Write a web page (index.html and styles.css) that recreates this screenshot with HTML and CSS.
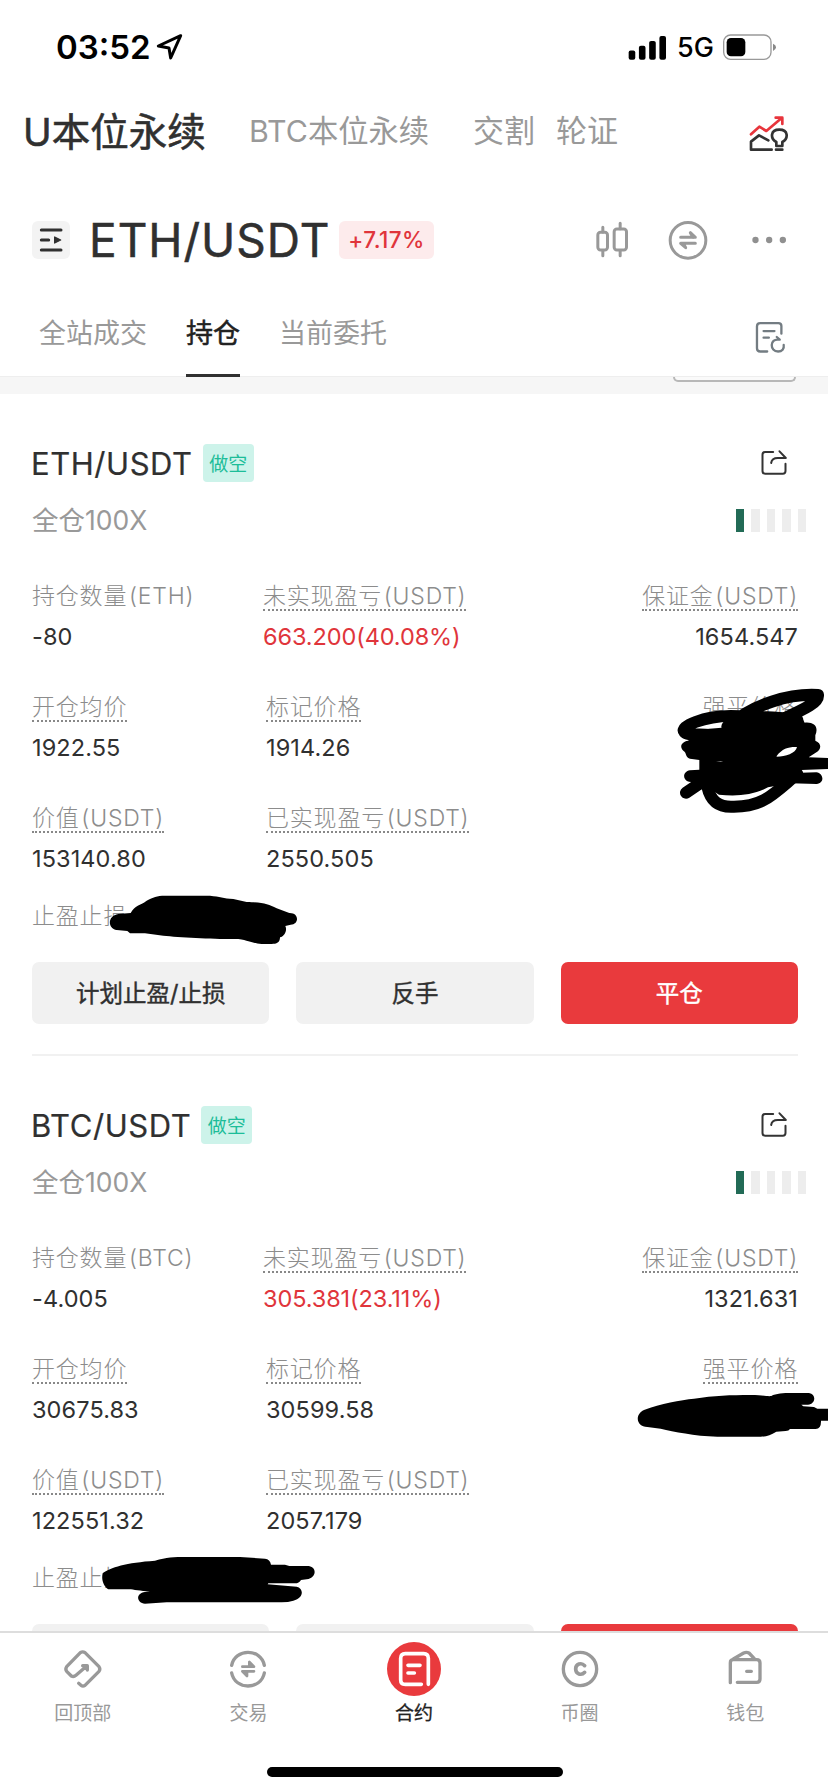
FILE: index.html
```html
<!DOCTYPE html>
<html lang="zh-CN">
<head>
<meta charset="utf-8">
<title>ETH/USDT 合约</title>
<link rel="stylesheet" href="styles.css">
</head>
<body>
<div class="screen">
  <div class="statusbar">
    <span class="clock">03:52</span>
    <svg class="locate" viewBox="466 98 90 90" fill="none" stroke="#000" stroke-width="9" stroke-linejoin="round"><path d="M543 109L476 140L508 146L513 176Z"/></svg>
    <svg class="signal" viewBox="640 100 118 80"><rect x="642" y="149" width="20" height="28" rx="6"/><rect x="673" y="135" width="20" height="42" rx="6"/><rect x="704" y="120" width="20" height="57" rx="6"/><rect x="735" y="105" width="20" height="72" rx="6"/></svg>
    <span class="network">5G</span>
    <svg class="battery" viewBox="924 98 165 84"><rect x="929" y="104" width="142" height="73" rx="21" fill="none" stroke="#999" stroke-width="4"/><rect x="938" y="113" width="56" height="55" rx="13"/><path d="M1077 130Q1086 134 1086 141Q1086 148 1077 152Z" fill="#888"/></svg>
  </div>

  <div class="markets">
    <span class="market active">U本位永续</span>
    <span class="market btc">BTC本位永续</span>
    <span class="market delivery">交割</span>
    <span class="market warrant">轮证</span>
    <svg class="insight" viewBox="1000 340 126 120" fill="none" stroke="#333" stroke-width="8" stroke-linecap="round" stroke-linejoin="round"><path d="M1009 401L1034 378L1055 391L1101 352M1083 351H1103V370" stroke="#e8353c"/><path d="M1061 419L1033 404L1009 423V447H1071M1084 447H1103M1085 436V424C1066 413 1067 387 1094 387C1121 387 1122 413 1103 424V436Z"/></svg>
  </div>

  <div class="pair">
    <span class="switcher"><svg viewBox="95 94 114 114" fill="none" stroke="#303030" stroke-width="9" stroke-linecap="round"><path d="M123 121H182M123 151H145M123 181H182"/><path d="M163 142V160L181 151Z" fill="#303030" stroke-width="4" stroke-linejoin="round"/></svg></span>
    <span class="symbol">ETH/USDT</span>
    <span class="change">+7.17%</span>
    <svg class="candles" viewBox="540 90 110 120" fill="none" stroke="#999" stroke-width="9" stroke-linecap="round"><rect x="551" y="127" width="29" height="53" rx="8"/><rect x="600" y="117" width="37" height="63" rx="8"/><path d="M566 112V126M566 182V197M618 100V116M618 182V197"/></svg>
    <svg class="swap" viewBox="761 90 120 120" fill="none" stroke="#999" stroke-width="9" stroke-linecap="round" stroke-linejoin="round"><circle cx="821" cy="151" r="53.5"/><path d="M799 142H843L828 128L836 142M843 160H799L814 173L807 160"/></svg>
    <svg class="more" viewBox="1010 136 110 30" fill="#909090"><circle cx="1023" cy="151" r="9.5"/><circle cx="1064" cy="151" r="9.5"/><circle cx="1105" cy="151" r="9.5"/></svg>
  </div>

  <div class="tabs">
    <span class="tab">全站成交</span>
    <span class="tab current">持仓</span>
    <span class="tab">当前委托</span>
    <svg class="history" viewBox="1018 390 100 105" fill="none" stroke="#737c82" stroke-width="7" stroke-linecap="round" stroke-linejoin="round"><path d="M1101 431V408Q1101 399 1092 399H1037Q1027 399 1027 409V475Q1027 485 1037 485H1058M1047 423H1080M1047 443H1063"/><path d="M1087 441L1096 449M1093 449C1065 445 1065 485 1091 485C1103 485 1110 477 1108 465"/></svg>
  </div>

  <div class="content">
    <div class="band"><span class="filter"></span></div>

    <section class="position">
      <div class="head"><span class="name">ETH/USDT</span><span class="side">做空</span>
        <svg class="share" viewBox="1038 90 86 84" fill="none" stroke="#333" stroke-width="6" stroke-linecap="round" stroke-linejoin="round"><path d="M1077 99H1053Q1045 99 1045 107V156Q1045 164 1053 164H1106Q1114 164 1114 156V134M1071 132Q1073 117 1091 117H1115L1096 97"/></svg></div>
      <div class="mode"><span>全仓100X</span><span class="risk"><i class="on"></i><i></i><i></i><i></i><i></i></span></div>
      <div class="stats">
        <div class="stat"><span class="label plain">持仓数量 (ETH)</span><span class="value">-80</span></div>
        <div class="stat pnl"><span class="label">未实现盈亏 (USDT)</span><span class="value loss">663.200(40.08%)</span></div>
        <div class="stat end"><span class="label">保证金 (USDT)</span><span class="value">1654.547</span></div>
        <div class="stat"><span class="label">开仓均价</span><span class="value">1922.55</span></div>
        <div class="stat"><span class="label">标记价格</span><span class="value">1914.26</span></div>
        <div class="stat end"><span class="label">强平价格</span></div>
        <div class="stat"><span class="label">价值 (USDT)</span><span class="value">153140.80</span></div>
        <div class="stat"><span class="label">已实现盈亏 (USDT)</span><span class="value">2550.505</span></div>
      </div>
      <div class="stops">止盈止损</div>
      <div class="actions"><span class="btn">计划止盈/止损</span><span class="btn">反手</span><span class="btn close">平仓</span></div>
    </section>

    <section class="position">
      <div class="head"><span class="name">BTC/USDT</span><span class="side">做空</span>
        <svg class="share" viewBox="1038 90 86 84" fill="none" stroke="#333" stroke-width="6" stroke-linecap="round" stroke-linejoin="round"><path d="M1077 99H1053Q1045 99 1045 107V156Q1045 164 1053 164H1106Q1114 164 1114 156V134M1071 132Q1073 117 1091 117H1115L1096 97"/></svg></div>
      <div class="mode"><span>全仓100X</span><span class="risk"><i class="on"></i><i></i><i></i><i></i><i></i></span></div>
      <div class="stats">
        <div class="stat"><span class="label plain">持仓数量 (BTC)</span><span class="value">-4.005</span></div>
        <div class="stat pnl"><span class="label">未实现盈亏 (USDT)</span><span class="value loss">305.381(23.11%)</span></div>
        <div class="stat end"><span class="label">保证金 (USDT)</span><span class="value">1321.631</span></div>
        <div class="stat"><span class="label">开仓均价</span><span class="value">30675.83</span></div>
        <div class="stat"><span class="label">标记价格</span><span class="value">30599.58</span></div>
        <div class="stat end"><span class="label">强平价格</span></div>
        <div class="stat"><span class="label">价值 (USDT)</span><span class="value">122551.32</span></div>
        <div class="stat"><span class="label">已实现盈亏 (USDT)</span><span class="value">2057.179</span></div>
      </div>
      <div class="stops">止盈止损</div>
      <div class="actions"><span class="btn"></span><span class="btn"></span><span class="btn close"></span></div>
    </section>
  </div>

  <nav class="tabbar">
    <div class="item"><svg viewBox="167 333 168 168" fill="none" stroke="#999" stroke-width="10" stroke-linecap="round" stroke-linejoin="round"><path d="M238 460L245 466Q251 470 257 466L299 424Q304 417 299 410L257 368Q250 363 243 368L202 410Q197 417 202 424L216 438Q223 442 230 436L263 407M250 407H264V420"/></svg><span>回顶部</span></div>
    <div class="item"><svg viewBox="662 333 168 168" fill="none" stroke="#999" stroke-width="10" stroke-linecap="round" stroke-linejoin="round"><path d="M697 406C707 354 785 354 795 406M697 429C707 481 785 481 795 429"/><path d="M729 410H764L750 396V410M764 424H729L743 438V424" stroke-width="8"/></svg><span>交易</span></div>
    <div class="item active"><svg viewBox="1158 333 168 168" fill="none" stroke="#fff" stroke-width="11" stroke-linecap="round" stroke-linejoin="round"><circle cx="1242" cy="417" r="81" fill="#e93a3d" stroke="none"/><path d="M1264 463H1216Q1202 463 1202 449V385Q1202 371 1216 371H1271Q1285 371 1285 385V463M1224 406H1260M1224 429H1243"/></svg><span>合约</span></div>
    <div class="item"><svg viewBox="413 333 168 168" fill="none" stroke="#999" stroke-width="10" stroke-linecap="round"><circle cx="497" cy="417" r="50"/><path d="M511 407C501 396 484 402 484 417C484 432 501 438 511 427" stroke-width="11"/></svg><span>币圈</span></div>
    <div class="item"><svg viewBox="911 333 168 168" fill="none" stroke="#999" stroke-width="10" stroke-linecap="round" stroke-linejoin="round"><path d="M951 458V398Q951 389 960 389H1030Q1040 389 1040 399V447Q1040 457 1030 457H972M960 387L991 369Q999 365 1007 369L1023 386M1000 424H1014"/></svg><span>钱包</span></div>
  </nav>
  <div class="home"></div>

  <svg class="ink" viewBox="0 0 828 1792">
    <g transform="translate(414 420) scale(.33333)">
      <path fill-rule="evenodd" d="M938 920C970 890 1040 868 1120 880L1160 885L1172 908C1200 905 1215 920 1204 946L1204 962C1225 970 1222 990 1205 998L1184 1012L1242 1014V1047L1162 1050V1058L1207 1057C1230 1060 1232 1090 1208 1092L1130 1090L1062 1102C1020 1125 970 1130 915 1124L862 1090L825 1085C805 1080 805 1055 828 1051L856 1049V1020L828 1016C812 1010 820 1000 808 992C795 980 803 965 822 962L828 958L870 930C890 922 920 926 938 920ZM1088 1008C1105 985 1125 980 1149 981C1145 1000 1115 1010 1088 1010ZM906 1023H920L928 1025Z"/>
      <path d="M940 920C1020 850 1130 820 1212 825C1215 850 1160 872 1100 900M1150 900C1090 890 1040 890 950 888C870 888 795 920 811 936C820 950 880 938 900 948M816 1118L880 1075M880 1100C890 1145 915 1163 960 1160C1050 1160 1080 1120 1150 1062" fill="none" stroke="#000" stroke-width="36" stroke-linecap="round" stroke-linejoin="round"/>
    </g>
    <g transform="translate(0 740) scale(.33333)"><path d="M355 522L392 519C405 495 420 497 440 482C460 472 470 467 495 467H630C660 470 670 475 700 477L740 486C790 487 805 492 830 505L868 519C898 518 898 553 872 554L856 558C862 570 855 588 840 592C840 608 830 612 815 612H785C755 610 750 602 715 597C650 598 540 592 490 587L435 580H390L382 573L350 570C322 565 322 527 355 522Z"/></g>
    <g transform="translate(0 1530) scale(.33333)"><path d="M308 130C330 112 380 98 465 92C500 82 520 81 560 81H720L795 86Q810 87 813 104H855L868 108H925C950 110 952 142 920 148L903 150Q897 160 885 160H805L803 163L890 170C912 175 912 205 880 212Q865 217 845 217H500L435 221C410 220 405 190 435 186L450 184C420 184 400 178 388 178H325C312 170 303 150 308 130Z"/></g>
    <g transform="translate(414 1340) scale(.33333)"><path d="M690 210C740 190 800 180 840 176C900 167 950 165 1010 165C1050 165 1060 170 1072 168C1085 160 1110 159 1130 159H1185C1208 162 1205 193 1182 194H1162L1168 199L1200 201L1210 206H1242V242H1221Q1222 267 1205 267H1128Q1125 273 1115 273L1087 275C1070 285 1060 290 1040 290H910C840 288 780 275 740 266L700 261C668 260 660 225 690 210Z"/></g>
  </svg>
</div>
</body>
</html>
```
FILE: styles.css
```css
* { box-sizing: border-box; }
body { margin: 0; background: #fff; color: #303030; font-family: Inter, "Noto Sans CJK SC", sans-serif; }
.screen { position: relative; width: 828px; height: 1792px; overflow: hidden; display: flex; flex-direction: column; background: #fff; white-space: nowrap; }
svg { display: block; flex: none; }

.statusbar { display: flex; align-items: center; height: 94px; padding-left: 56px; color: #000; }
.clock { width: 99px; font-size: 33px; font-weight: 600; }
.locate { width: 30px; height: 30px; }
.signal { width: 39px; height: 27px; margin-left: 443px; }
.network { margin-left: 10px; width: 37px; font-size: 27px; font-weight: 500; }
.battery { width: 55px; height: 28px; margin-left: 8px; }

.markets { display: flex; align-items: center; height: 74px; padding: 0 0 5px 23px; font-size: 31px; color: #999; }
.market.active { width: 226px; font-size: 38.5px; color: #303030; -webkit-text-stroke: .6px; }
.market.btc { width: 224px; font-size: 30.3px; }
.market.delivery { width: 83px; }
.market.warrant { width: 192px; }
.insight { width: 42px; height: 40px; margin-top: 11px; }

.pair { display: flex; align-items: center; height: 144px; padding-left: 32px; }
.switcher { width: 38px; height: 38px; border-radius: 6px; background: #f3f3f3; }
.switcher svg { width: 38px; height: 38px; }
.symbol { width: 250px; margin-left: 19px; font-size: 46px; letter-spacing: 1px; -webkit-text-stroke: .5px; }
.change { width: 95px; height: 38px; line-height: 38px; border-radius: 6px; background: #fdebec; color: #e0353b; font-size: 22.5px; font-weight: 500; letter-spacing: .4px; text-align: center; }
.candles { width: 37px; height: 40px; margin-left: 160px; }
.swap { width: 40px; height: 40px; margin-left: 37px; }
.more { width: 37px; height: 10px; margin-left: 43px; }

.tabs { display: flex; align-items: stretch; height: 65px; padding-left: 39px; font-size: 27px; line-height: 44px; color: #999; gap: 39px; border-bottom: 1px solid #eee; }
.tab.current { height: 65px; color: #222; -webkit-text-stroke: .5px; border-bottom: 3px solid #303030; }
.history { width: 33px; height: 35px; margin: 8px 0 0 328px; }

.content { height: 1254px; overflow: hidden; }
.band { display: flex; justify-content: flex-end; height: 17px; background: #f6f6f6; padding-right: 32px; }
.filter { width: 123px; height: 5px; border: 2px solid #b8b8b8; border-top: 0; border-radius: 0 0 9px 9px; background: #fafafa; }

.position { height: 662px; margin: 0 30px 0 32px; padding-top: 50px; border-bottom: 2px solid #f1f1f1; }
.head { display: flex; align-items: center; height: 38px; }
.name { margin-left: -1px; font-size: 31px; letter-spacing: .55px; -webkit-text-stroke: .2px; }
.side { width: 51px; height: 38px; margin-left: 10px; line-height: 41px; border-radius: 4px; background: #cdf3ea; color: #1dbd99; font-size: 19px; text-align: center; }
.share { width: 29px; height: 28px; margin: 0 9px 0 auto; }
.mode { display: flex; justify-content: space-between; align-items: center; height: 40px; margin: 18px -8px 0 0; font-size: 26.5px; color: #999; }
.mode > span:first-child { margin-top: -3px; }
.risk { display: flex; gap: 7px; }
.risk i { width: 8.5px; height: 23px; background: #ededed; }
.risk i.on { background: #226b56; }
.stats { display: grid; grid-template-columns: 234px 296px 236px; grid-auto-rows: 111px; height: 333px; margin-top: 39px; }
.stat { display: flex; flex-direction: column; align-items: flex-start; }
.pnl { margin-left: -3px; }
.pnl .value { letter-spacing: -.1px; }
.end { align-items: flex-end; }
.label { height: 32px; line-height: 35px; font-size: 23px; font-weight: 300; letter-spacing: .8px; word-spacing: -5.5px; color: #8c8c8c; border-bottom: 2px dotted #888; }
.plain { border-color: transparent; }
.value { margin-top: 8px; line-height: 35px; font-size: 23.5px; letter-spacing: .1px; }
.loss { color: #e0353b; }
.stops { margin-top: -13px; height: 34px; line-height: 35px; font-size: 23px; font-weight: 300; letter-spacing: .8px; color: #8c8c8c; }
.actions { display: flex; gap: 27px; margin-top: 29px; }
.btn { flex: 1; height: 62px; line-height: 63px; border-radius: 7px; background: #f1f1f1; text-align: center; font-size: 23.5px; -webkit-text-stroke: .4px; }
.btn.close { background: #e93a3d; color: #fff; }

.tabbar { display: flex; flex: none; height: 161px; border-top: 2px solid #ddd; background: #fff; }
.item { flex: 1; display: flex; flex-direction: column; align-items: center; padding-top: 8px; font-size: 19px; color: #999; }
.item svg { width: 56px; height: 56px; }
.item span { margin-top: 3px; line-height: 28px; }
.item.active { color: #222; }
.item.active span { -webkit-text-stroke: .3px; }
.home { position: absolute; left: 267px; top: 1767px; width: 296px; height: 10px; border-radius: 5px; background: #000; }
.ink { position: absolute; left: 0; top: 0; width: 828px; height: 1792px; }
```
